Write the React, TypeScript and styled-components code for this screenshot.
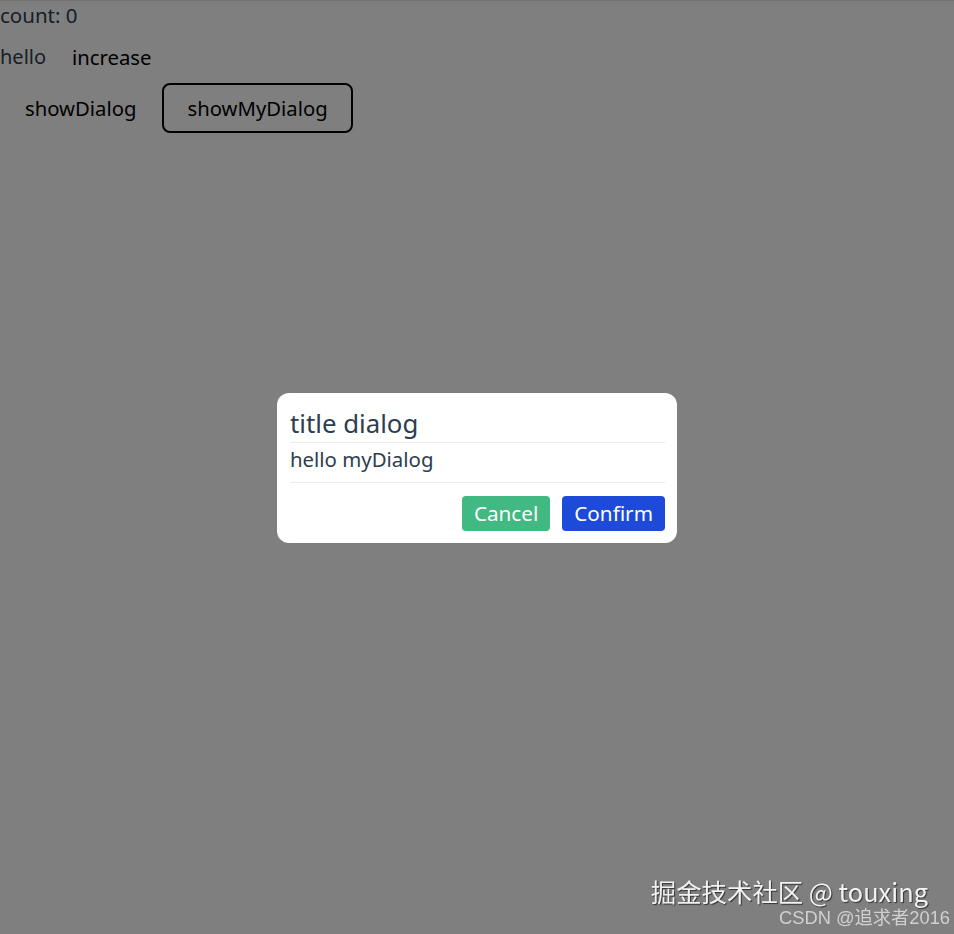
import React from "react";
import styled, { createGlobalStyle } from "styled-components";

const GlobalStyle = createGlobalStyle`
  html, body { margin: 0; padding: 0; background: #ffffff; }
  body { font-family: "Noto Sans", "Open Sans", sans-serif; color: #2c3e50; }
  * { box-sizing: border-box; }
`;

const Page = styled.div`
  display: flex;
  flex-direction: column;
  border-top: 1px solid #e6e6e6;
`;

const Count = styled.div`
  font-size: 20.5px;
  line-height: 29px;
  height: 29px;
`;

const Row = styled.div<{ $h: number }>`
  display: flex;
  align-items: center;
  gap: 1px;
  height: ${(p) => p.$h}px;
  font-size: 20px;
`;

const Btn = styled.button<{ $outlined?: boolean }>`
  font-family: inherit;
  font-size: 20.3px;
  color: #000;
  background: transparent;
  border: 2px solid ${(p) => (p.$outlined ? "#000" : "transparent")};
  border-radius: 8px;
  padding: 0 23px;
  height: 50px;
  cursor: pointer;
`;

const Overlay = styled.div`
  position: fixed;
  inset: 0;
  background: rgba(0, 0, 0, 0.5);
  display: flex;
  align-items: center;
  justify-content: center;
`;

const Dialog = styled.div`
  width: 400px;
  background: #fff;
  border-radius: 12px;
  padding: 10px 12px 12px 13px;
  display: flex;
  flex-direction: column;
  margin-top: 1px;
`;

const Title = styled.div`
  font-size: 25.8px;
  line-height: 41px;
  height: 40px;
  border-bottom: 1px solid #ececec;
`;

const Body = styled.div`
  font-size: 20.4px;
  line-height: 30px;
  height: 40px;
  padding-top: 1px;
  border-bottom: 1px solid #ececec;
`;

const Footer = styled.div`
  display: flex;
  justify-content: flex-end;
  gap: 12px;
  margin-top: 13px;
`;

const DlgBtn = styled.button<{ $bg: string }>`
  font-family: inherit;
  font-size: 20.7px;
  color: #fff;
  background: ${(p) => p.$bg};
  border: none;
  border-radius: 4px;
  height: 35px;
  padding: 0 12px;
  cursor: pointer;
`;

const Watermark = styled.div`
  position: fixed;
  right: 4px;
  bottom: 6px;
  display: flex;
  flex-direction: column;
  align-items: flex-end;
  font-family: "Noto Sans CJK SC", sans-serif;
`;

const WmMain = styled.div`
  font-size: 25.4px;
  line-height: 30px;
  color: #f2f2f2;
  text-shadow: 1px 1px 1px #333;
  margin-right: 22px;
  margin-bottom: 2px;
`;

const WmSub = styled.div`
  font-family: "Liberation Sans", "Noto Sans CJK SC", sans-serif;
  font-size: 18.3px;
  line-height: 20px;
  color: #d0d0d0;
`;

export default function App() {
  return (
    <>
      <GlobalStyle />
      <Page>
        <Count>count: 0</Count>
        <Row $h={53}>
          <span>hello</span>
          <Btn>increase</Btn>
        </Row>
        <Row $h={50}>
          <Btn>showDialog</Btn>
          <Btn $outlined>showMyDialog</Btn>
        </Row>
      </Page>
      <Overlay>
        <Dialog>
          <Title>title dialog</Title>
          <Body>hello myDialog</Body>
          <Footer>
            <DlgBtn $bg="#42b883">Cancel</DlgBtn>
            <DlgBtn $bg="#1d4ad8">Confirm</DlgBtn>
          </Footer>
        </Dialog>
      </Overlay>
      <Watermark>
        <WmMain>掘金技术社区 @ touxing</WmMain>
        <WmSub>CSDN @追求者2016</WmSub>
      </Watermark>
    </>
  );
}
